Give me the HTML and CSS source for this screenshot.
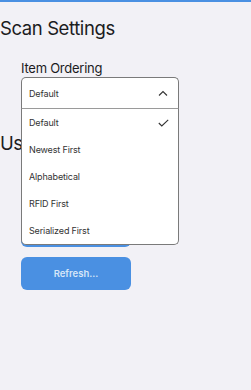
FILE: index.html
```html
<!DOCTYPE html>
<html lang="en">
<head>
    <meta charset="UTF-8">
    <meta name="viewport" content="width=device-width, initial-scale=1.0">
    <title>Scan Settings</title>
    <link rel="stylesheet" href="styles.css">
</head>
<body>
    <div class="page">
        <section class="section">
            <h2>Scan Settings</h2>
            <div class="field">
                <label class="field-label">Item Ordering</label>
                <div class="select open">
                    <div class="select-head">
                        <span>Default</span>
                        <svg class="chevron" width="10" height="6" viewBox="0 0 10 6">
                            <path d="M1 5.5 L5 1.5 L9 5.5" fill="none" stroke="#333" stroke-width="1.1"/>
                        </svg>
                    </div>
                    <ul class="select-list">
                        <li class="selected">Default
                            <svg class="check" width="11" height="8" viewBox="0 0 11 8">
                                <path d="M0.8 4 L3.8 7 L10.2 0.8" fill="none" stroke="#333" stroke-width="1.1"/>
                            </svg>
                        </li>
                        <li>Newest First</li>
                        <li>Alphabetical</li>
                        <li>RFID First</li>
                        <li>Serialized First</li>
                    </ul>
                </div>
            </div>
        </section>

        <section class="section">
            <h2>User Settings</h2>
            <div class="actions">
                <button class="btn">Sign Out</button>
                <button class="btn">Refresh...</button>
            </div>
        </section>
    </div>
</body>
</html>
```

FILE: styles.css
```css
body {
    margin: 0;
    font-family: Inter, "Noto Sans", sans-serif;
    background-color: #f2f1f6;
    color: #1c1c1e;
}

.page {
    border-top: 2px solid #4a90e2;
    min-height: 388px;
}

.section h2 {
    font-size: 18.5px;
    font-weight: 400;
    letter-spacing: -0.4px;
    line-height: 24px;
    margin: 0;
    padding-top: 14px;
}

.section + .section h2 {
    padding-top: 22px;
}

.field {
    padding-left: 21px;
    padding-top: 20px;
    width: 158px;
}

.field-label {
    display: block;
    font-size: 13px;
    letter-spacing: -0.25px;
    line-height: 17px;
}

.select {
    position: relative;
    font-size: 9px;
    letter-spacing: -0.15px;
    color: #333;
}

.select-head {
    height: 32px;
    box-sizing: border-box;
    background: white;
    border: 1px solid #7a7a7a;
    border-bottom-color: #9a9a9a;
    border-radius: 5px 5px 0 0;
    display: flex;
    align-items: center;
    justify-content: space-between;
    padding: 0 10px 0 7px;
}

.select-list {
    position: absolute;
    top: 32px;
    left: 0;
    right: 0;
    margin: 0;
    padding: 0;
    list-style: none;
    background: white;
    border: 1px solid #7a7a7a;
    border-top: none;
    border-radius: 0 0 5px 5px;
    z-index: 2;
}

.select-list li {
    height: 27px;
    display: flex;
    align-items: center;
    justify-content: space-between;
    padding: 0 9px 0 7px;
}

.actions {
    padding-left: 21px;
    padding-top: 59px;
    display: flex;
    flex-direction: column;
    gap: 10px;
}

.btn {
    width: 110px;
    height: 33px;
    border: none;
    border-radius: 6px;
    background: #4a90e2;
    color: #d6e6f8;
    font-family: Inter, "Noto Sans", sans-serif;
    font-size: 9.5px;
    font-weight: 600;
}
```
